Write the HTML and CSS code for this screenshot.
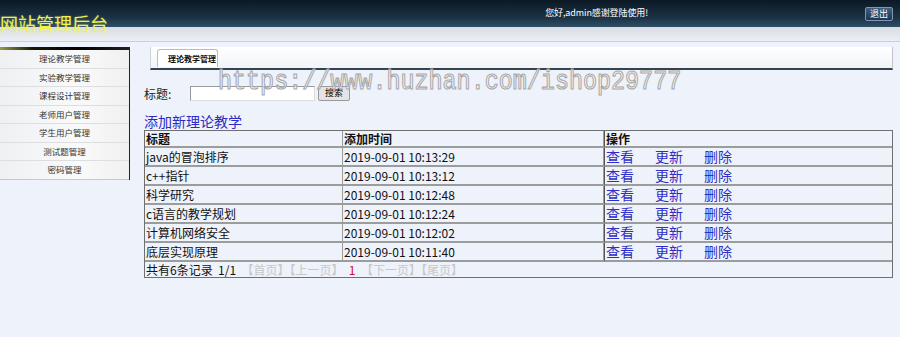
FILE: index.html
```html
<!DOCTYPE html>
<html lang="zh-CN">
<head>
  <meta charset="UTF-8">
  <title>网站管理后台</title>
  <link rel="stylesheet" href="styles.css">
</head>
<body>

  <div class="header">
    <div class="brand">网站管理后台</div>
    <div class="greet">您好,admin感谢登陆使用!</div>
    <button class="logout" type="button">退出</button>
  </div>

  <div class="main">
    <ul class="menu">
      <li>理论教学管理</li>
      <li>实验教学管理</li>
      <li>课程设计管理</li>
      <li>老师用户管理</li>
      <li>学生用户管理</li>
      <li>测试题管理</li>
      <li>密码管理</li>
    </ul>

    <div class="content">
      <div class="tabs">
        <div class="tab">理论教学管理</div>
      </div>

      <form class="search" action="#" onsubmit="return false;">
        <label for="title">标题:</label>
        <input type="text" id="title" name="title">
        <button type="submit">搜索</button>
      </form>

      <a class="add" href="#">添加新理论教学</a>

      <table class="list">
        <tr class="head">
          <td class="c1">标题</td>
          <td class="c2">添加时间</td>
          <td class="c3">操作</td>
        </tr>
        <tr>
          <td>java的冒泡排序</td>
          <td>2019-09-01 10:13:29</td>
          <td class="ops"><a href="#">查看</a><a href="#">更新</a><a href="#">删除</a></td>
        </tr>
        <tr>
          <td>c++指针</td>
          <td>2019-09-01 10:13:12</td>
          <td class="ops"><a href="#">查看</a><a href="#">更新</a><a href="#">删除</a></td>
        </tr>
        <tr>
          <td>科学研究</td>
          <td>2019-09-01 10:12:48</td>
          <td class="ops"><a href="#">查看</a><a href="#">更新</a><a href="#">删除</a></td>
        </tr>
        <tr>
          <td>c语言的教学规划</td>
          <td>2019-09-01 10:12:24</td>
          <td class="ops"><a href="#">查看</a><a href="#">更新</a><a href="#">删除</a></td>
        </tr>
        <tr>
          <td>计算机网络安全</td>
          <td>2019-09-01 10:12:02</td>
          <td class="ops"><a href="#">查看</a><a href="#">更新</a><a href="#">删除</a></td>
        </tr>
        <tr>
          <td>底层实现原理</td>
          <td>2019-09-01 10:11:40</td>
          <td class="ops"><a href="#">查看</a><a href="#">更新</a><a href="#">删除</a></td>
        </tr>
        <tr class="pager">
          <td colspan="3">共有6条记录&nbsp; 1/1 &nbsp;<span class="off">【首页】【上一页】</span>&nbsp; <span class="cur">1</span> &nbsp;<span class="off">【下一页】【尾页】</span></td>
        </tr>
      </table>
    </div>
  </div>

  <div class="mark">https://www.huzhan.com/ishop29777</div>

</body>
</html>
```

FILE: styles.css
```css
body {
  margin: 0;
  background: #eef2fa;
  font-family: "Noto Sans CJK SC", "Microsoft YaHei", sans-serif;
  font-size: 12px;
  color: #000;
}

/* top bar */
.header {
  height: 42px;
  display: flex;
  align-items: flex-start;
  background: linear-gradient(to bottom, #0b1924 0, #1c3346 18px, #2f4f66 27px, #d8dde4 27px, #eceff3 41px, #c9cfd6 41px, #c9cfd6 42px);
}
.brand {
  margin-top: 13px;
  font-size: 18px;
  line-height: 20px;
  color: #eef24a;
  text-shadow: 0 0 2px rgba(255, 255, 120, 0.4);
}
.greet {
  margin-left: auto;
  margin-top: 7px;
  font-size: 9px;
  line-height: 12px;
  letter-spacing: -0.1px;
  color: #fff;
}
.logout {
  margin: 7px 7px 0 217px;
  width: 28px;
  height: 14px;
  padding: 0;
  font-family: inherit;
  font-size: 9px;
  line-height: 12px;
  color: #fff;
  background: linear-gradient(#3f5f84, #1a3656);
  border: 1px solid #7f96ae;
  border-radius: 2px;
}

.main {
  display: flex;
  align-items: flex-start;
  padding-top: 5px;
}

/* left menu */
.menu {
  list-style: none;
  margin: 0;
  padding: 0;
  width: 130px;
  border-top: 3px solid #000;
  border-image: linear-gradient(to right, #9aa050, #1a1a0a 25%, #000 60%, #222) 1;
  border-right: 1px solid #b5b5b5;
  box-sizing: border-box;
  background: linear-gradient(to right, #eef0f2, #fafafa 60%, #f0f0f0);
}
.menu li {
  height: 17.5px;
  line-height: 17.5px;
  border-bottom: 1px solid #dcdee2;
  text-align: center;
  font-size: 8.5px;
  color: #333;
}
.menu li:last-child {
  border-bottom: 1px solid #c8c8c8;
}

/* right side */
.content {
  margin-left: 14px;
  width: 749px;
}
.tabs {
  margin-left: 6px;
  height: 19px;
  padding-top: 2px;
  display: flex;
  background: linear-gradient(#ffffff, #f2f4f7);
  border-left: 1px solid #d0d4da;
  border-right: 1px solid #c0c4ca;
  border-bottom: 2px solid #34444f;
}
.tab {
  margin-left: 6px;
  width: 61px;
  padding-left: 10px;
  height: 18px;
  line-height: 18px;
  font-size: 8px;
  font-weight: bold;
  color: #111;
  background: #fff;
  border: 1px solid #b8bcc2;
  border-bottom: none;
  border-radius: 3px 3px 0 0;
  box-sizing: border-box;
}

.search {
  display: flex;
  align-items: center;
  margin: 14px 0 0;
  height: 18px;
}
.search label {
  width: 46px;
  font-size: 12px;
  color: #222;
}
.search input {
  width: 125px;
  height: 15px;
  padding: 0;
  box-sizing: border-box;
  border: 1px solid #999;
  border-bottom-color: #ddd;
  border-right-color: #ddd;
  background: #fff;
}
.search button {
  margin-left: 3px;
  width: 32px;
  height: 15px;
  padding: 0;
  font-family: inherit;
  font-size: 9px;
  line-height: 12px;
  background: #e4e4e4;
  border: 1px solid #9a9a9a;
  border-radius: 2px;
}

.add {
  display: block;
  margin-top: 11px;
  font-size: 14px;
  line-height: 17px;
  color: #2b2bc4;
  text-decoration: none;
}

/* record table */
.list {
  width: 749px;
  border-collapse: separate;
  border-spacing: 0;
  border: 1px solid #6f6f6f;
  table-layout: fixed;
}
.list td {
  border: 1px solid #9c9c9c;
  border-width: 0 1px 2px 0;
  padding: 0 0 0 1px;
  height: 17px;
  line-height: 17px;
  white-space: nowrap;
  color: #111;
}
.list td:last-child {
  border-right: none;
}
.list .c1 { width: 196px; }
.list .c2 { width: 259px; }
.list .head td {
  height: 15px;
  line-height: 15px;
  font-weight: bold;
}
.list td.c3,
.list td.ops {
  border-left: 1px solid #555;
}
.ops a {
  display: inline-block;
  margin-right: 21px;
  font-size: 14px;
  color: #2e2ec6;
  text-decoration: none;
}
.list .pager td {
  height: 15px;
  line-height: 15px;
  border-bottom: none;
}
.pager .off {
  color: #c8c8c8;
}
.pager .cur {
  color: #d0102a;
}

/* site watermark laid over the page */
.mark {
  position: absolute;
  left: 218px;
  top: 67px;
  font-family: "Liberation Mono", monospace;
  font-size: 23.4px;
  line-height: 30px;
  color: rgba(255, 255, 255, 0.55);
  -webkit-text-stroke: 1px #a8a8a8;
  transform: scaleY(1.15);
  pointer-events: none;
}
```
